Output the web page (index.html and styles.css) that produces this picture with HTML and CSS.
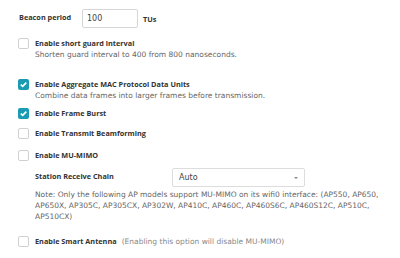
FILE: index.html
```html
<!DOCTYPE html>
<html lang="en">
	<head>
		<meta charset="UTF-8" />
		<title>Radio Settings</title>
		<link rel="stylesheet" href="styles.css">
	</head>
	<body>
		<div class="settings">
			<div class="field-row beacon">
				<label class="field-label">Beacon period</label>
				<input class="text-input" type="text" value="100">
				<span class="unit">TUs</span>
			</div>

			<div class="option opt-sgi">
				<span class="box"></span>
				<div class="option-text">
					<div class="option-label">Enable short guard interval</div>
					<div class="option-help">Shorten guard interval to 400 from 800 nanoseconds.</div>
				</div>
			</div>

			<div class="option opt-ampdu">
				<span class="box checked"><svg viewBox="0 0 11 11" width="11" height="11"><path d="M2.8 5.6 L4.7 7.4 L8.3 3.6" fill="none" stroke="#fff" stroke-width="1.6"/></svg></span>
				<div class="option-text">
					<div class="option-label">Enable Aggregate MAC Protocol Data Units</div>
					<div class="option-help">Combine data frames into larger frames before transmission.</div>
				</div>
			</div>

			<div class="option opt-burst">
				<span class="box checked"><svg viewBox="0 0 11 11" width="11" height="11"><path d="M2.8 5.6 L4.7 7.4 L8.3 3.6" fill="none" stroke="#fff" stroke-width="1.6"/></svg></span>
				<div class="option-text">
					<div class="option-label">Enable Frame Burst</div>
				</div>
			</div>

			<div class="option opt-beam">
				<span class="box"></span>
				<div class="option-text">
					<div class="option-label">Enable Transmit Beamforming</div>
				</div>
			</div>

			<div class="option opt-mimo">
				<span class="box"></span>
				<div class="option-text">
					<div class="option-label">Enable MU-MIMO</div>
				</div>
			</div>

			<div class="sub-section">
				<div class="chain-row">
					<span class="chain-label">Station Receive Chain</span>
					<div class="select">
						<span>Auto</span>
						<span class="caret"></span>
					</div>
				</div>
				<p class="note">Note: Only the following AP models support MU-MIMO on its wifi0 interface: (AP550, AP650, AP650X, AP305C, AP305CX, AP302W, AP410C, AP460C, AP460S6C, AP460S12C, AP510C, AP510CX)</p>
			</div>

			<div class="option opt-smart">
				<span class="box"></span>
				<div class="option-text">
					<div class="option-label">Enable Smart Antenna<span class="aside">(Enabling this option will disable MU-MIMO)</span></div>
				</div>
			</div>
		</div>
	</body>
</html>
```

FILE: styles.css
```css
body {
	margin: 0;
	background-color: #fff;
	font-family: "DejaVu Sans", sans-serif;
	font-size: 7.5px;
	color: #333;
}
.settings {
	padding: 9px 0 0 18px;
}
.field-row {
	display: flex;
	align-items: center;
	height: 19px;
}
.field-label,
.unit,
.option-label,
.chain-label {
	font-family: "Open Sans", sans-serif;
	font-size: 7.3px;
	font-weight: bold;
	color: #333;
}
.field-label {
	width: 63px;
	margin-left: 1px;
	margin-top: -3px;
}
.text-input {
	box-sizing: border-box;
	width: 56px;
	height: 19px;
	border: 1px solid #d6d6d6;
	border-radius: 2px;
	padding: 0 4px;
	font: inherit;
	font-size: 8px;
	color: #444;
	outline: none;
}
.unit {
	margin-left: 5px;
}
.option {
	display: flex;
	align-items: flex-start;
	line-height: 11px;
}
.box {
	box-sizing: border-box;
	flex: none;
	width: 11px;
	height: 11px;
	border: 1px solid #d0d0d0;
	border-radius: 2px;
	margin-right: 6px;
	background-color: #fff;
}
.box.checked {
	border: none;
	background-color: #1a9bb3;
}
.box svg {
	display: block;
}
.option-help {
	color: #666;
}
.aside {
	font-family: "DejaVu Sans", sans-serif;
	font-size: 7.5px;
	font-weight: normal;
	color: #888;
	margin-left: 5px;
}
.opt-sgi {
	margin-top: 10px;
}
.opt-ampdu {
	margin-top: 19px;
}
.opt-burst {
	margin-top: 7px;
}
.opt-beam {
	margin-top: 9px;
}
.opt-mimo {
	margin-top: 11px;
}
.sub-section {
	padding-left: 17px;
	margin-top: 7px;
}
.chain-row {
	display: flex;
	align-items: center;
}
.chain-label {
	width: 137px;
	margin-top: -4px;
}
.select {
	box-sizing: border-box;
	display: flex;
	align-items: center;
	justify-content: space-between;
	width: 133px;
	height: 19px;
	border: 1px solid #ddd;
	border-radius: 2px;
	padding: 0 6px 0 6px;
	font-size: 8px;
	color: #444;
}
.caret {
	width: 0;
	height: 0;
	border-left: 2px solid transparent;
	border-right: 2px solid transparent;
	border-top: 2px solid #888;
}
.note {
	margin: 2px 0 0 0;
	padding-right: 4px;
	line-height: 11px;
	color: #666;
}
.opt-smart {
	margin-top: 14px;
}
```
